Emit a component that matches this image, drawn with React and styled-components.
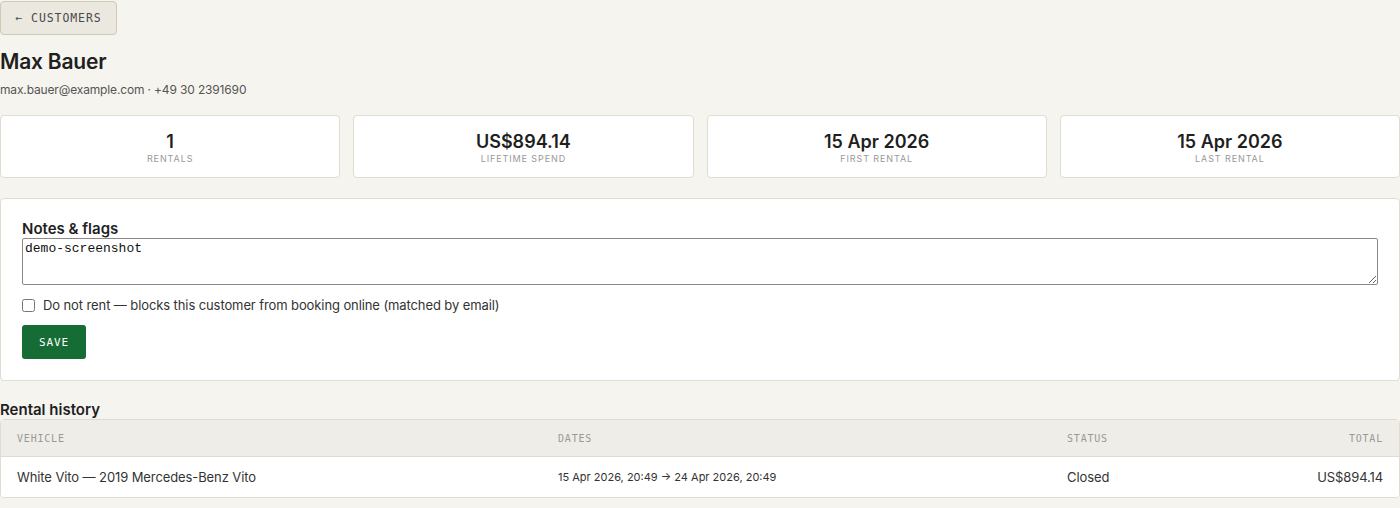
import React from "react";
import styled, { createGlobalStyle } from "styled-components";

const GlobalStyle = createGlobalStyle`
	html, body {
		margin: 0;
		padding: 0;
		background: #f6f4ef;
		font-family: Inter, "Liberation Sans", sans-serif;
		color: #222;
	}
`;

const Page = styled.div`
	display: flex;
	flex-direction: column;
	padding-top: 1px;
`;

const BackBtn = styled.button`
	align-self: flex-start;
	height: 34px;
	width: 117px;
	padding: 0;
	background: #ebe8df;
	border: 1px solid #cfc9b6;
	border-radius: 4px;
	font-family: "DejaVu Sans Mono", monospace;
	font-size: 11.5px;
	letter-spacing: 0.9px;
	color: #4a4a4a;
`;

const Name = styled.h1`
	margin: 14px 0 0;
	font-size: 21px;
	font-weight: 600;
	line-height: 26px;
	letter-spacing: -0.2px;
	color: #1f1f1f;
`;

const Contact = styled.div`
	margin-top: 7px;
	font-size: 12px;
	line-height: 16px;
	letter-spacing: -0.15px;
	color: #555;
`;

const Stats = styled.div`
	display: grid;
	grid-template-columns: repeat(4, 1fr);
	gap: 13px;
	margin-top: 17px;
`;

const Card = styled.div`
	background: #fff;
	border: 1px solid #e0dccf;
	border-radius: 4px;
	box-sizing: border-box;
`;

const StatCard = styled(Card)`
	height: 63px;
	display: flex;
	flex-direction: column;
	align-items: center;
	justify-content: center;
`;

const StatValue = styled.div`
	font-size: 18px;
	font-weight: 600;
	line-height: 22px;
	margin-top: 2px;
	color: #1f1f1f;
`;

const StatLabel = styled.div`
	font-size: 9px;
	letter-spacing: 0.9px;
	text-transform: uppercase;
	color: #999;
	line-height: 12px;
`;

const NotesCard = styled(Card)`
	margin-top: 20px;
	padding: 21px 21px 21px;
	display: flex;
	flex-direction: column;
`;

const SectionTitle = styled.h2`
	margin: 0;
	font-size: 15px;
	font-weight: 600;
	line-height: 18px;
	color: #1f1f1f;
`;

const Notes = styled.textarea`
	height: 47px;
	box-sizing: border-box;
	margin: 0;
	padding: 2px;
	border: 1px solid #8a8a8a;
	border-radius: 2px;
	font-family: "Liberation Mono", monospace;
	font-size: 13px;
	color: #111;
	resize: vertical;
`;

const CheckRow = styled.label`
	display: flex;
	align-items: center;
	gap: 8px;
	margin-top: 12px;
	font-size: 13px;
	letter-spacing: -0.1px;
	color: #333;
	line-height: 16px;
`;

const Check = styled.input`
	margin: 0;
	width: 13px;
	height: 13px;
`;

const SaveBtn = styled.button`
	align-self: flex-start;
	margin-top: 12px;
	width: 64px;
	height: 34px;
	background: #156c34;
	border: none;
	border-radius: 3px;
	color: #fff;
	font-family: "DejaVu Sans Mono", monospace;
	font-size: 11px;
	letter-spacing: 0.9px;
`;

const HistoryTitle = styled(SectionTitle)`
	margin-top: 20px;
	line-height: 18px;
`;

const Table = styled(Card)`
	overflow: hidden;
`;

const Row = styled.div`
	display: grid;
	grid-template-columns: 541px 509px 1fr 200px;
	align-items: center;
	padding: 0 16px;
	height: ${(p) => (p.$head ? "36px" : "40px")};
	background: ${(p) => (p.$head ? "#efede7" : "#fff")};
	border-bottom: ${(p) => (p.$head ? "1px solid #e0dccf" : "none")};
`;

const HeadCell = styled.div`
	font-family: "DejaVu Sans Mono", monospace;
	font-size: 10px;
	letter-spacing: 0.8px;
	color: #999;
	text-align: ${(p) => (p.$right ? "right" : "left")};
`;

const Cell = styled.div`
	font-size: ${(p) => (p.$small ? "11px" : "13px")};
	letter-spacing: ${(p) => (p.$small ? "0" : "-0.1px")};
	color: #333;
	text-align: ${(p) => (p.$right ? "right" : "left")};
`;

const stats = [
	{ value: "1", label: "Rentals" },
	{ value: "US$894.14", label: "Lifetime spend" },
	{ value: "15 Apr 2026", label: "First rental" },
	{ value: "15 Apr 2026", label: "Last rental" },
];

export default function App() {
	return (
		<>
			<GlobalStyle />
			<Page>
				<BackBtn>← CUSTOMERS</BackBtn>
				<Name>Max Bauer</Name>
				<Contact>max.bauer@example.com · +49 30 2391690</Contact>
				<Stats>
					{stats.map((s) => (
						<StatCard key={s.label}>
							<StatValue>{s.value}</StatValue>
							<StatLabel>{s.label}</StatLabel>
						</StatCard>
					))}
				</Stats>
				<NotesCard>
					<SectionTitle>Notes &amp; flags</SectionTitle>
					<Notes defaultValue="demo-screenshot" />
					<CheckRow>
						<Check type="checkbox" />
						Do not rent — blocks this customer from booking online (matched by email)
					</CheckRow>
					<SaveBtn>SAVE</SaveBtn>
				</NotesCard>
				<HistoryTitle>Rental history</HistoryTitle>
				<Table>
					<Row $head>
						<HeadCell>VEHICLE</HeadCell>
						<HeadCell>DATES</HeadCell>
						<HeadCell>STATUS</HeadCell>
						<HeadCell $right>TOTAL</HeadCell>
					</Row>
					<Row>
						<Cell>White Vito — 2019 Mercedes-Benz Vito</Cell>
						<Cell $small>15 Apr 2026, 20:49 → 24 Apr 2026, 20:49</Cell>
						<Cell>Closed</Cell>
						<Cell $right>US$894.14</Cell>
					</Row>
				</Table>
			</Page>
		</>
	);
}
